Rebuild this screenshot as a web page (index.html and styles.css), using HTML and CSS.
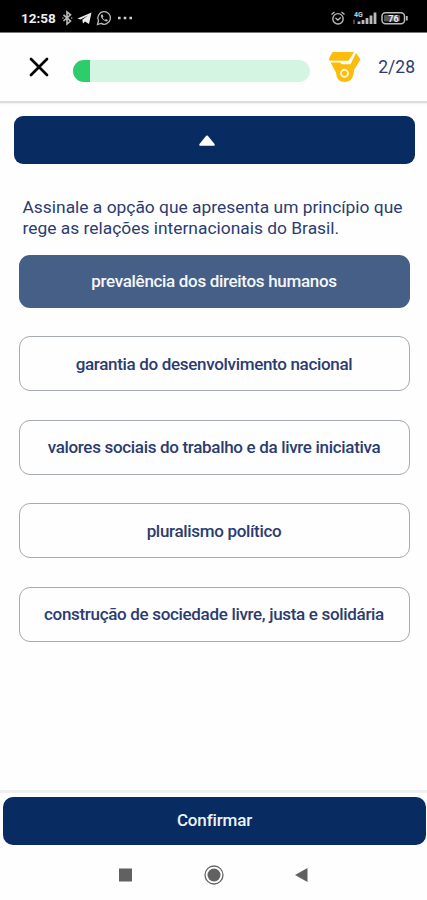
FILE: index.html
```html
<!DOCTYPE html>
<html lang="pt-BR">

<head>
    <meta charset="UTF-8">
    <meta name="viewport" content="width=device-width, initial-scale=1.0">
    <title>Quiz</title>
    <link rel="stylesheet" href="styles.css">
</head>

<body>
    <div class="status-bar">
        <span class="clock">12:58</span>
        <svg class="status-left" width="72" height="16" viewBox="0 0 72 16">
            <!-- bluetooth -->
            <path d="M1.500 4.800l7 6.200L5 14V2l3.500 2.800-7 6.200" fill="none" stroke="#bbb" stroke-width="1.600" />
            <path d="M.5 8h1M9.300 8h1" stroke="#bbb" stroke-width="1.500" />
            <!-- telegram -->
            <path d="M15.500 8.500L29.500 2.500 27 14l-4-2.500-2 2-.7-3.800L26 5.500 18.500 9.500z" fill="#eee" />
            <!-- whatsapp -->
            <path d="M35.500 14.500l1-3.800a6.300 6.300 0 1 1 2.500 2.700z" fill="none" stroke="#bbb" stroke-width="1.300" />
            <path d="M39.500 4.500q-1.500 1 0 3.400t4.500 3.600q1.600 0 1.900-1.500l-2-1.100-1 1q-1.600-.6-2.300-2.300l.8-1-.8-2z" fill="#bbb" />
            <!-- more -->
            <path d="M56 8h2.600M61.700 8h2.600M67.400 8h2.600" stroke="#ccc" stroke-width="2.400" />
        </svg>
        <svg class="status-right" width="80" height="16" viewBox="0 0 80 16">
            <!-- alarm -->
            <g fill="none" stroke="#bbb" stroke-width="1.400">
                <circle cx="8" cy="8.800" r="5.200" />
                <path d="M1.500 4.500l3-2.500M14.500 4.500l-3-2.500M5.500 8l2.300 2 3-2.500" />
            </g>
            <!-- signal -->
            <text class="network" x="24" y="6.500">4G</text>
            <path d="M24 14V9.500" stroke="#444" stroke-width="2" />
            <path d="M29 14v-2.500M33 14v-4M37 14V8M41 14V5.500M45 14V2.500" stroke="#bbb" stroke-width="2.800" />
            <!-- battery -->
            <rect x="52" y="2.800" width="22.500" height="11" rx="3.500" fill="none" stroke="#bbb" stroke-width="1.500" />
            <rect x="54" y="5" width="16" height="6.500" rx="1" fill="#555" />
            <path d="M76.800 6v4.500" stroke="#bbb" stroke-width="1.800" />
            <text class="battery" x="63.500" y="11.500">76</text>
        </svg>
    </div>

    <header class="header">
        <svg class="close" width="20" height="20" viewBox="0 0 20 20">
            <path d="M2 2l16 16M18 2L2 18" stroke="#050505" stroke-width="2.700" stroke-linecap="round" />
        </svg>
        <div class="progress">
            <div class="progress-fill"></div>
        </div>
        <svg class="medal" width="34" height="32" viewBox="0 0 34 32">
            <path d="M5 1H26L20.500 9.800H2Q.3 9 1.300 7L4 2Q4.500 1 5 1z" fill="#fbbc0c" />
            <path d="M28 2L32.500 8.500 26 19Q25.500 31 16.800 31 8.500 31 8 21.500L2.500 11.500H12L14 13.300H22.500z" fill="#fbbc0c" />
            <circle cx="16.500" cy="22.300" r="3.500" fill="none" stroke="#fff4d0" stroke-width="1.900" />
        </svg>
        <span class="counter">2/28</span>
    </header>

    <main class="content">
        <button class="collapse">
            <svg width="16" height="11" viewBox="0 0 16 11">
                <path d="M7.200.8q.8-.8 1.600 0L15.500 9q.8 1.800-1 1.800h-13Q-.3 10.800.5 9z" fill="#fff" />
            </svg>
        </button>
        <p class="question">Assinale a opção que apresenta um princípio que<br>rege as relações internacionais do Brasil.</p>
        <div class="options">
            <button class="option selected">prevalência dos direitos humanos</button>
            <button class="option">garantia do desenvolvimento nacional</button>
            <button class="option">valores sociais do trabalho e da livre iniciativa</button>
            <button class="option">pluralismo político</button>
            <button class="option">construção de sociedade livre, justa e solidária</button>
        </div>
    </main>

    <footer class="footer">
        <button class="confirm">Confirmar</button>
    </footer>

    <nav class="nav-bar">
        <svg width="190" height="20" viewBox="0 0 190 20">
            <rect x="1" y="3.500" width="13" height="13" fill="#616161" />
            <circle cx="96" cy="10" r="9" fill="none" stroke="#666" stroke-width="1.300" />
            <circle cx="96" cy="10" r="6.500" fill="#616161" />
            <path d="M189.500 3v14L177 10z" fill="#616161" />
        </svg>
    </nav>
</body>

</html>
```

FILE: styles.css
```css
:root {
    --navy: #082c61;
    --text: #2c3c70;
    --green: #2dcd6c;
}

* {
    box-sizing: border-box;
    margin: 0;
    padding: 0;
    font-family: Roboto, sans-serif;
}

body {
    background: #fefefe;
    color: var(--text);
    height: 900px;
    display: flex;
    flex-direction: column;
    overflow: hidden;
}

button {
    border: none;
    cursor: pointer;
}

.status-bar {
    height: 33px;
    background: #000;
    border-bottom: 1px solid #777;
    display: flex;
    align-items: center;
    padding: 3px 17px 0 21px;
}

.clock {
    width: 41px;
    color: #eee;
    font-size: 13.500px;
    font-weight: 700;
}

.status-right {
    margin-left: auto;
}

.network {
    font-size: 7px;
    font-weight: 700;
    fill: #ccc;
}

.battery {
    font-size: 9px;
    font-weight: 700;
    fill: #eee;
    text-anchor: middle;
}

.header {
    height: 70px;
    display: flex;
    align-items: center;
    padding: 0 12px 0 29px;
    border-bottom: 2px solid #dcdcdc;
    box-shadow: 0 1px 1px #f2f2f2;
}

.progress {
    width: 237px;
    height: 22px;
    margin: 7px 18px 0 24px;
    border-radius: 11px;
    background: #d5f5e3;
    overflow: hidden;
}

.progress-fill {
    width: 17px;
    height: 100%;
    background: var(--green);
}

.counter {
    margin-left: auto;
    font-size: 17.500px;
}

.content {
    flex: 1;
    padding: 13px 12px 0 13.500px;
}

.collapse {
    display: flex;
    width: 401.500px;
    height: 48px;
    align-items: center;
    justify-content: center;
    padding-right: 15px;
    border-radius: 9px;
    background: var(--navy);
}

.question {
    margin: 33px 0 17px 9px;
    font-size: 17.400px;
    line-height: 20.500px;
    white-space: nowrap;
}

.options {
    width: 391px;
    margin-left: 5px;
    display: flex;
    flex-direction: column;
    gap: 28.400px;
}

.option {
    height: 55px;
    border: 1.500px solid #a5abb1;
    border-radius: 11px;
    background: #fefefe;
    color: var(--text);
    font-size: 17px;
    font-weight: 500;
    letter-spacing: -0.320px;
    white-space: nowrap;
}

.option.selected {
    height: 53px;
    padding-bottom: 1px;
    border: none;
    background: #465f87;
    color: #f4f7fb;
}

.footer {
    height: 55px;
    padding: 4px 1px 0 3px;
    border-top: 3px solid #f0f0f2;
}

.confirm {
    width: 423px;
    height: 48px;
    padding-bottom: 2px;
    border-radius: 10px;
    background: var(--navy);
    color: #edf2fa;
    font-size: 17px;
    font-weight: 500;
    letter-spacing: -0.150px;
}

.nav-bar {
    height: 55px;
    display: flex;
    justify-content: center;
    padding: 20px 2px 0 0;
}
```
